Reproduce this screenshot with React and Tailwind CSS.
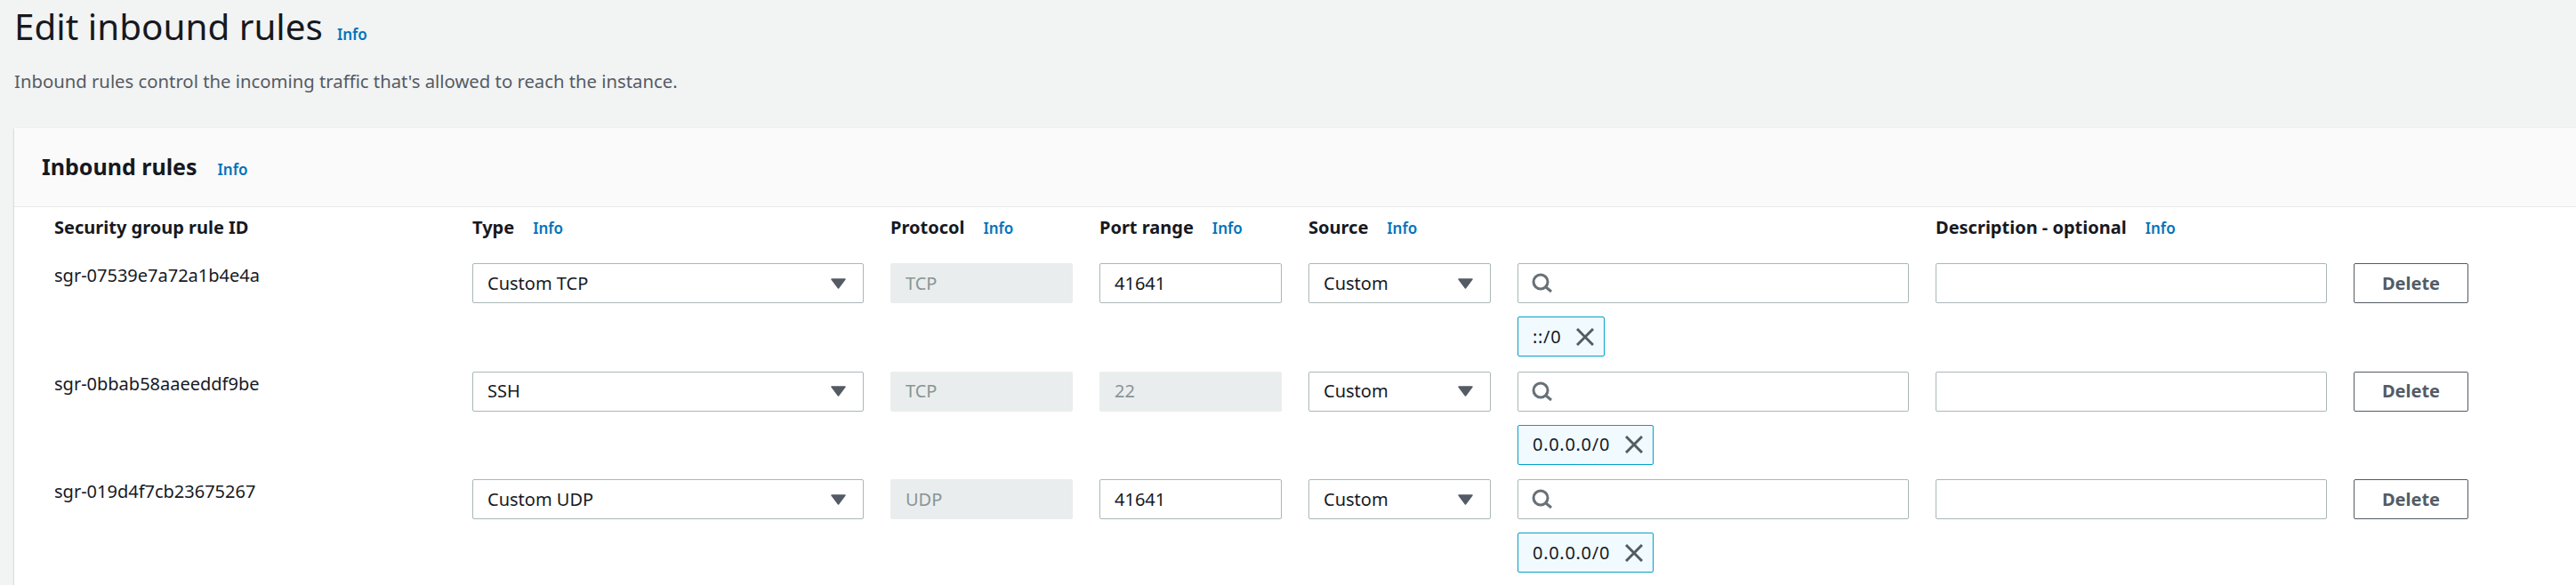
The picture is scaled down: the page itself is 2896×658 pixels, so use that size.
const rules = [
  { id: 'sgr-07539e7a72a1b4e4a', type: 'Custom TCP', protocol: 'TCP', port: '41641', portLocked: false, cidr: '::/0' },
  { id: 'sgr-0bbab58aaeeddf9be', type: 'SSH', protocol: 'TCP', port: '22', portLocked: true, cidr: '0.0.0.0/0' },
  { id: 'sgr-019d4f7cb23675267', type: 'Custom UDP', protocol: 'UDP', port: '41641', portLocked: false, cidr: '0.0.0.0/0' },
];

const columns = 'grid grid-cols-[440px_440px_205px_205px_205px_440px_440px_129px] gap-x-[30px]';

function Info({ className = '' }) {
  return <a className={`text-[17px] leading-none font-semibold text-[#0073bb] ${className}`}>Info</a>;
}

function Label({ children, info = true }) {
  return (
    <div className="flex items-center gap-[21px] h-[24px]">
      <span className="text-[20px] leading-none font-bold text-[#16191f] whitespace-nowrap">{children}</span>
      {info && <Info />}
    </div>
  );
}

function Caret() {
  return (
    <svg width="17" height="12" viewBox="0 0 17 12" className="shrink-0">
      <path d="M1 1h15l-7.5 10z" fill="#545b64" stroke="#545b64" strokeWidth="1.5" strokeLinejoin="round" />
    </svg>
  );
}

function Select({ value }) {
  return (
    <div className="h-[45px] flex items-center justify-between pl-[16px] pr-[19px] bg-white border border-[#aab7b8] rounded-[2px] text-[20px] text-[#16191f]">
      <span>{value}</span>
      <Caret />
    </div>
  );
}

function Field({ value, locked }) {
  return (
    <div className={`h-[45px] flex items-center px-[16px] rounded-[2px] text-[20px] border ${locked ? 'bg-[#eaeded] border-[#eaeded] text-[#879596]' : 'bg-white border-[#aab7b8] text-[#16191f]'}`}>
      {value}
    </div>
  );
}

function SearchBox() {
  return (
    <div className="h-[45px] flex items-center pl-[15px] bg-white border border-[#aab7b8] rounded-[2px]">
      <svg width="23" height="23" viewBox="0 0 23 23" fill="none" stroke="#687078" strokeWidth="3">
        <circle cx="10" cy="10" r="8" />
        <path d="M16 16l6 5" />
      </svg>
    </div>
  );
}

function Tag({ label }) {
  return (
    <div className="mt-[15px] h-[45px] w-fit flex items-center gap-[17px] pl-[16px] pr-[11px] bg-[#f1faff] border border-[#00a1c9] rounded-[2px] text-[20px] tracking-[0.7px] text-[#16191f]">
      <span>{label}</span>
      <svg width="20" height="20" viewBox="0 0 20 20" fill="none" stroke="#545b64" strokeWidth="3">
        <path d="M1 1l18 18M19 1L1 19" />
      </svg>
    </div>
  );
}

function Row({ rule }) {
  return (
    <div className={`${columns} h-[121.5px]`}>
      <div className="text-[20px] leading-[28px] text-[#16191f]">{rule.id}</div>
      <Select value={rule.type} />
      <Field value={rule.protocol} locked />
      <Field value={rule.port} locked={rule.portLocked} />
      <Select value="Custom" />
      <div>
        <SearchBox />
        <Tag label={rule.cidr} />
      </div>
      <div className="h-[45px] bg-white border border-[#aab7b8] rounded-[2px]" />
      <button className="h-[45px] bg-white border border-[#545b64] rounded-[2px] text-[20px] font-bold text-[#545b64]">Delete</button>
    </div>
  );
}

export default function App() {
  return (
    <div className="h-[658px] overflow-hidden bg-[#f2f3f3] font-['Noto_Sans',sans-serif]">
      <div className="pl-[16px] pt-[10px] h-[144px]">
        <div className="flex items-end gap-[16px] h-[40px]">
          <h1 className="text-[40.4px] leading-[40px] text-[#16191f]">Edit inbound rules</h1>
          <Info className="pb-[3px]" />
        </div>
        <p className="mt-[27px] text-[20.3px] leading-[28px] text-[#545b64]">Inbound rules control the incoming traffic that's allowed to reach the instance.</p>
      </div>
      <div className="ml-[16px] h-[514px] bg-white shadow-[0_1px_2px_rgba(0,28,36,0.3)]">
        <div className="h-[89px] pl-[31px] flex items-center gap-[23px] bg-[#fafafa] border-b border-[#eaeded]">
          <h2 className="text-[25px] font-bold text-[#16191f]">Inbound rules</h2>
          <Info className="pt-[4px]" />
        </div>
        <div className="pl-[45px] pt-[11px]">
          <div className={`${columns} h-[52px]`}>
            <Label info={false}>Security group rule ID</Label>
            <Label>Type</Label>
            <Label>Protocol</Label>
            <Label>Port range</Label>
            <Label>Source</Label>
            <div />
            <Label>Description - optional</Label>
            <div />
          </div>
          {rules.map(rule => <Row key={rule.id} rule={rule} />)}
        </div>
      </div>
    </div>
  );
}
